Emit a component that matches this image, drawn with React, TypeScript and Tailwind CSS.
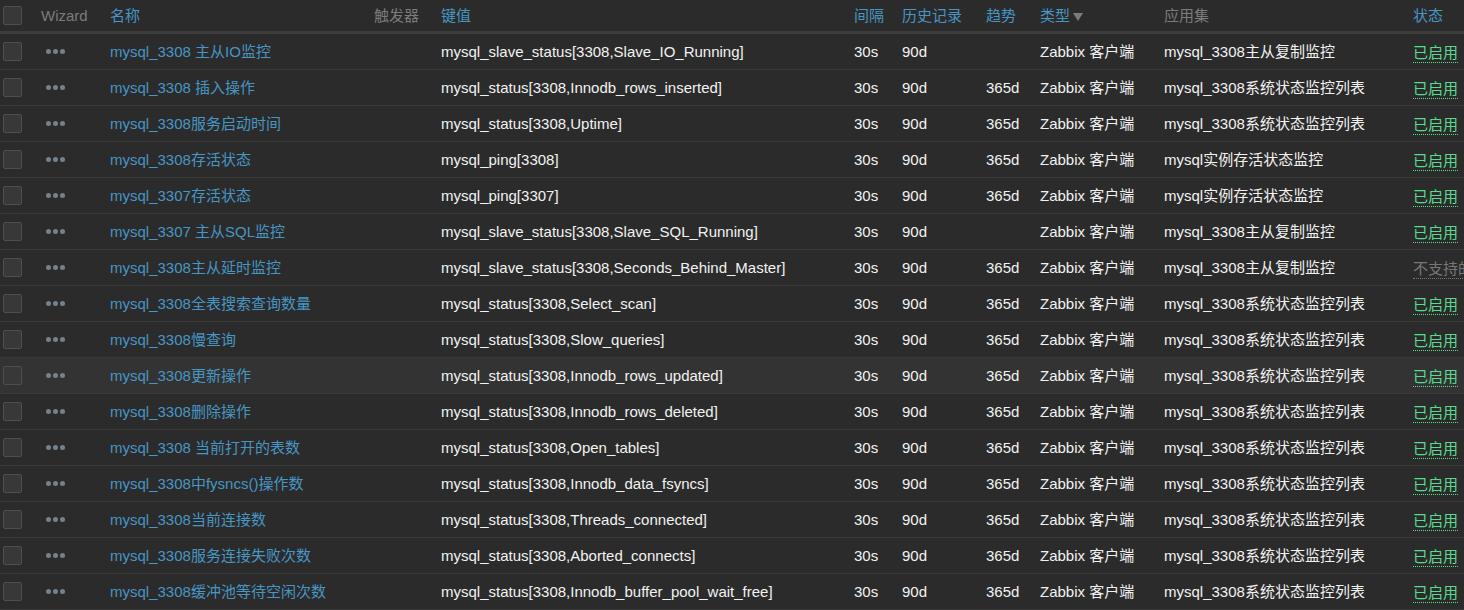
import React from "react";

type Row = {
  name: string;
  key: string;
  trends: string;
  app: string;
  status: "ok" | "unsupported";
};

const SYS = "mysql_3308系统状态监控列表";
const REP = "mysql_3308主从复制监控";
const PING = "mysql实例存活状态监控";

const rows: Row[] = [
  { name: "mysql_3308 主从IO监控", key: "mysql_slave_status[3308,Slave_IO_Running]", trends: "", app: REP, status: "ok" },
  { name: "mysql_3308 插入操作", key: "mysql_status[3308,Innodb_rows_inserted]", trends: "365d", app: SYS, status: "ok" },
  { name: "mysql_3308服务启动时间", key: "mysql_status[3308,Uptime]", trends: "365d", app: SYS, status: "ok" },
  { name: "mysql_3308存活状态", key: "mysql_ping[3308]", trends: "365d", app: PING, status: "ok" },
  { name: "mysql_3307存活状态", key: "mysql_ping[3307]", trends: "365d", app: PING, status: "ok" },
  { name: "mysql_3307 主从SQL监控", key: "mysql_slave_status[3308,Slave_SQL_Running]", trends: "", app: REP, status: "ok" },
  { name: "mysql_3308主从延时监控", key: "mysql_slave_status[3308,Seconds_Behind_Master]", trends: "365d", app: REP, status: "unsupported" },
  { name: "mysql_3308全表搜索查询数量", key: "mysql_status[3308,Select_scan]", trends: "365d", app: SYS, status: "ok" },
  { name: "mysql_3308慢查询", key: "mysql_status[3308,Slow_queries]", trends: "365d", app: SYS, status: "ok" },
  { name: "mysql_3308更新操作", key: "mysql_status[3308,Innodb_rows_updated]", trends: "365d", app: SYS, status: "ok" },
  { name: "mysql_3308删除操作", key: "mysql_status[3308,Innodb_rows_deleted]", trends: "365d", app: SYS, status: "ok" },
  { name: "mysql_3308 当前打开的表数", key: "mysql_status[3308,Open_tables]", trends: "365d", app: SYS, status: "ok" },
  { name: "mysql_3308中fysncs()操作数", key: "mysql_status[3308,Innodb_data_fsyncs]", trends: "365d", app: SYS, status: "ok" },
  { name: "mysql_3308当前连接数", key: "mysql_status[3308,Threads_connected]", trends: "365d", app: SYS, status: "ok" },
  { name: "mysql_3308服务连接失败次数", key: "mysql_status[3308,Aborted_connects]", trends: "365d", app: SYS, status: "ok" },
  { name: "mysql_3308缓冲池等待空闲次数", key: "mysql_status[3308,Innodb_buffer_pool_wait_free]", trends: "365d", app: SYS, status: "ok" },
];

const GRID =
  "grid grid-cols-[36px_69px_255px_76px_413px_48px_84px_54px_124px_249px_56px] items-center";

function Checkbox() {
  return (
    <div className="w-[19px] h-[19px] rounded-[2px] border border-[#4e4e4e] bg-[#383838]" />
  );
}

function Dots() {
  return (
    <div className="flex items-center gap-[2px]">
      <span className="w-[5px] h-[5px] rounded-full bg-[#75818b]" />
      <span className="w-[5px] h-[5px] rounded-full bg-[#75818b]" />
      <span className="w-[5px] h-[5px] rounded-full bg-[#75818b]" />
    </div>
  );
}

export default function App() {
  return (
    <div
      className="w-[1464px] h-[610px] overflow-hidden bg-[#2b2b2b] text-[15px] text-[#f2f2f2] leading-[17px]"
      style={{ fontFamily: '"Liberation Sans", Arial, "Noto Sans CJK SC", sans-serif' }}
    >
      {/* header */}
      <div className={`${GRID} h-[34px] border-b-[3px] border-[#3d3d3d] whitespace-nowrap`}>
        <div className="pl-[3px]">
          <Checkbox />
        </div>
        <div className="pl-[5px] text-[#7b7b7b]">Wizard</div>
        <div className="pl-[5px] text-[#4796c4]">名称</div>
        <div className="pr-[17px] text-right text-[#7b7b7b]">触发器</div>
        <div className="pl-[5px] text-[#4796c4]">键值</div>
        <div className="pl-[5px] text-[#4796c4]">间隔</div>
        <div className="pl-[5px] text-[#4796c4]">历史记录</div>
        <div className="pl-[5px] text-[#4796c4]">趋势</div>
        <div className="pl-[5px] text-[#4796c4] flex items-center">
          <span>类型</span>
          <span className="ml-[3px] mt-[2px] w-0 h-0 border-l-[5px] border-r-[5px] border-t-[8px] border-l-transparent border-r-transparent border-t-[#7b7b7b]" />
        </div>
        <div className="pl-[5px] text-[#7b7b7b]">应用集</div>
        <div className="pl-[5px] text-[#4796c4]">状态</div>
      </div>

      {rows.map((r, i) => (
        <div
          key={i}
          className={`${GRID} h-[36px] border-b border-[#383838] whitespace-nowrap ${
            i === 9 ? "bg-[#333333]" : ""
          }`}
        >
          <div className="pl-[3px]">
            <Checkbox />
          </div>
          <div className="pl-[10px]">
            <Dots />
          </div>
          <div className="pl-[5px] text-[#4796c4]">{r.name}</div>
          <div />
          <div className="pl-[5px]">{r.key}</div>
          <div className="pl-[5px]">30s</div>
          <div className="pl-[5px]">90d</div>
          <div className="pl-[5px]">{r.trends}</div>
          <div className="pl-[5px]">Zabbix 客户端</div>
          <div className="pl-[5px]">{r.app}</div>
          <div className="pl-[5px] pt-[3px] overflow-visible">
            {r.status === "ok" ? (
              <span className="inline-block text-[#59db8f] border-b border-dotted border-[#59db8f] pb-[1px]">
                已启用
              </span>
            ) : (
              <span className="inline-block text-[#777777] border-b border-dotted border-[#777777] pb-[1px]">
                不支持的
              </span>
            )}
          </div>
        </div>
      ))}
    </div>
  );
}
